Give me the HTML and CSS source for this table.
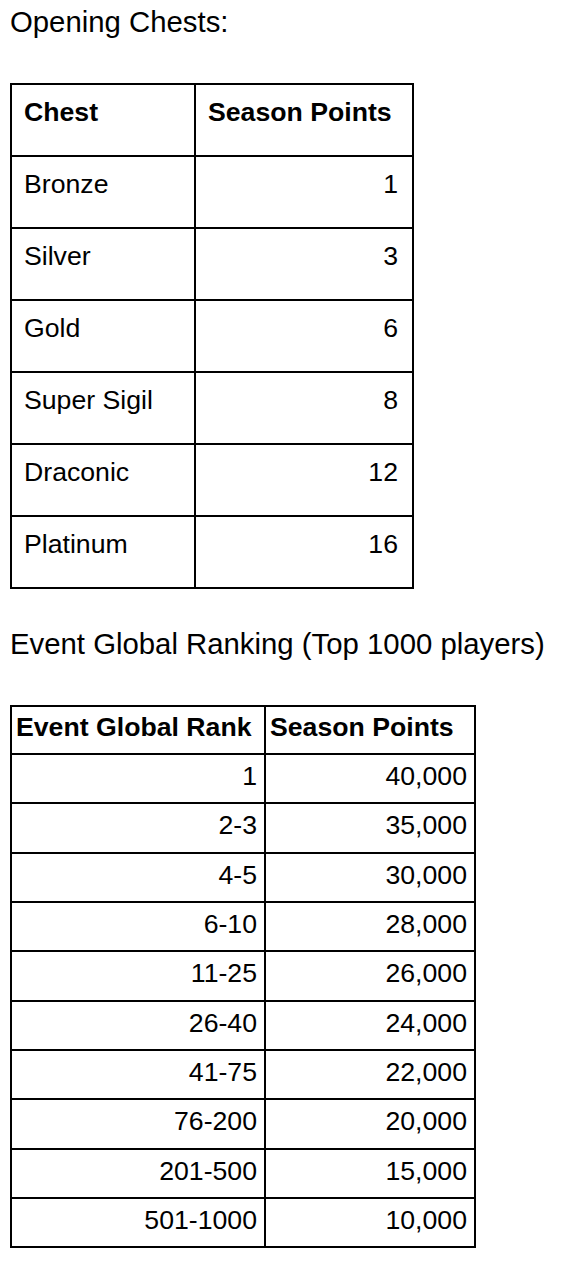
FILE: index.html
```html
<!DOCTYPE html>
<html>
<head>
<meta charset="utf-8">
<link rel="stylesheet" href="styles.css">
</head>
<body>
<div class="page">
  <p class="para">Opening Chests:</p>
  <table class="tbl chests">
    <colgroup><col class="c1"><col class="c2"></colgroup>
    <tr><th>Chest</th><th>Season Points</th></tr>
    <tr><td>Bronze</td><td class="num">1</td></tr>
    <tr><td>Silver</td><td class="num">3</td></tr>
    <tr><td>Gold</td><td class="num">6</td></tr>
    <tr><td>Super Sigil</td><td class="num">8</td></tr>
    <tr><td>Draconic</td><td class="num">12</td></tr>
    <tr><td>Platinum</td><td class="num">16</td></tr>
  </table>
  <p class="para second">Event Global Ranking (Top 1000 players)</p>
  <table class="tbl ranks">
    <colgroup><col class="c1"><col class="c2"></colgroup>
    <tr><th>Event Global Rank</th><th>Season Points</th></tr>
    <tr><td class="num">1</td><td class="num">40,000</td></tr>
    <tr><td class="num">2-3</td><td class="num">35,000</td></tr>
    <tr><td class="num">4-5</td><td class="num">30,000</td></tr>
    <tr><td class="num">6-10</td><td class="num">28,000</td></tr>
    <tr><td class="num">11-25</td><td class="num">26,000</td></tr>
    <tr><td class="num">26-40</td><td class="num">24,000</td></tr>
    <tr><td class="num">41-75</td><td class="num">22,000</td></tr>
    <tr><td class="num">76-200</td><td class="num">20,000</td></tr>
    <tr><td class="num">201-500</td><td class="num">15,000</td></tr>
    <tr><td class="num">501-1000</td><td class="num">10,000</td></tr>
  </table>
</div>
</body>
</html>
```
FILE: styles.css
```css
html, body {
  margin: 0;
  padding: 0;
  background: #fff;
}
body {
  font-family: "Liberation Sans", Arial, sans-serif;
  color: #000;
}
.page {
  padding: 5px 0 0 10px;
}
.para {
  margin: 0;
  font-size: 29.33px;
  line-height: 34px;
}
.second {
  margin-top: 38px;
}
.tbl {
  border-collapse: collapse;
  table-layout: fixed;
  margin-top: 44px;
}
.tbl th, .tbl td {
  border: 2px solid #000;
  text-align: left;
  vertical-align: top;
  font-size: 26.67px;
  line-height: 31px;
}
.tbl th {
  font-weight: bold;
}
.tbl .num {
  text-align: right;
}
.chests {
  width: 402px;
}
.chests .c1 { width: 184px; }
.chests .c2 { width: 218px; }
.chests th, .chests td {
  padding: 12px 14px 27px 12px;
}
.ranks {
  width: 464px;
}
.ranks .c1 { width: 254px; }
.ranks .c2 { width: 210px; }
.ranks th, .ranks td {
  padding: 6px 7px 10.33px 4px;
}
.ranks th {
  padding-top: 5px;
  padding-bottom: 10px;
}
```
